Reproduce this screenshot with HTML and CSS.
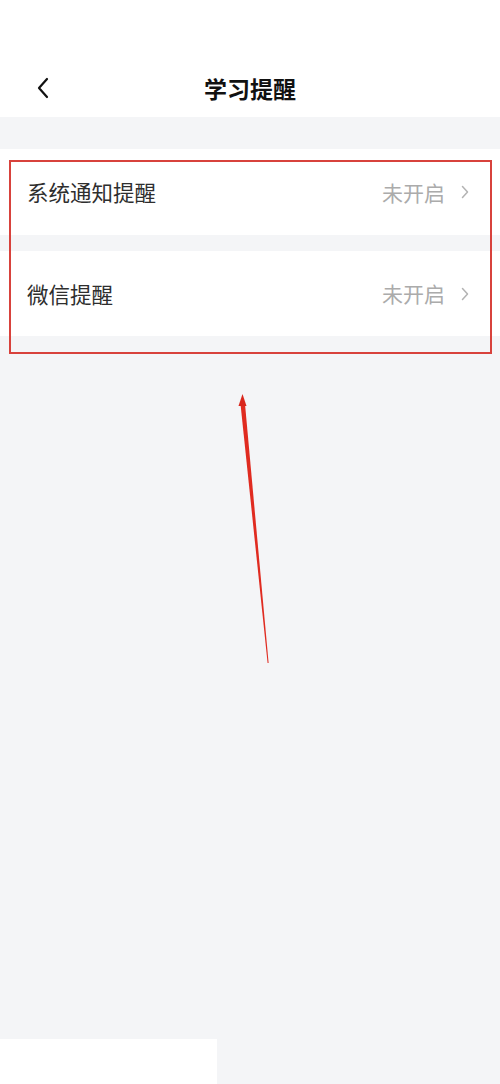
FILE: index.html
```html
<!DOCTYPE html>
<html lang="zh">
<head>
<meta charset="utf-8">
<link rel="stylesheet" href="styles.css">
</head>
<body>
<div class="page">
  <header class="nav">
    <span class="back">
      <svg width="14" height="22" viewBox="0 0 14 22"><path d="M11 2 L3 11 L11 20" fill="none" stroke="#111" stroke-width="2.2" stroke-linecap="round" stroke-linejoin="round"/></svg>
    </span>
    <h1 class="title">学习提醒</h1>
  </header>
  <div class="list">
    <div class="row row-first">
      <span class="label">系统通知提醒</span>
      <span class="value">未开启<svg class="chev" width="8" height="14" viewBox="0 0 8 14"><path d="M1.5 1.5 L6.5 7 L1.5 12.5" fill="none" stroke="#b3b3b3" stroke-width="1.5" stroke-linecap="round" stroke-linejoin="round"/></svg></span>
    </div>
    <div class="row row-second">
      <span class="label">微信提醒</span>
      <span class="value">未开启<svg class="chev" width="8" height="14" viewBox="0 0 8 14"><path d="M1.5 1.5 L6.5 7 L1.5 12.5" fill="none" stroke="#b3b3b3" stroke-width="1.5" stroke-linecap="round" stroke-linejoin="round"/></svg></span>
    </div>
  </div>
  <div class="spacer"></div>
  <div class="bottom-block"></div>
  <div class="highlight"></div>
  <svg class="arrow" width="500" height="1084" viewBox="0 0 500 1084">
    <polygon points="240.5,404 245,404 268.6,663 267.6,663" fill="#e02b20"/>
    <polygon points="242.5,394 238.5,406 246.5,406" fill="#d9261c"/>
  </svg>
</div>
</body>
</html>
```
FILE: styles.css
```css
* { box-sizing: border-box; }
html, body { margin: 0; padding: 0; }
body {
  background: #f4f5f7;
  font-family: "Noto Sans CJK SC", "Noto Sans", sans-serif;
  color: #333;
}
.page {
  position: relative;
  width: 500px;
  height: 1084px;
  display: flex;
  flex-direction: column;
  overflow: hidden;
}
.nav {
  height: 117px;
  background: #fff;
  position: relative;
  display: flex;
  align-items: center;
  justify-content: center;
  padding-top: 59px;
}
.nav .back {
  position: absolute;
  left: 36px;
  top: 77px;
  display: flex;
}
.title {
  margin: 0;
  font-size: 23px;
  font-weight: 700;
  color: #111;
  line-height: 1;
}
.list {
  margin-top: 32px;
  display: flex;
  flex-direction: column;
  gap: 16px;
}
.row {
  background: #fff;
  display: flex;
  align-items: center;
  justify-content: space-between;
  padding: 0 31px 0 27px;
}
.row-first { height: 86px; }
.row-second { height: 85px; }
.label {
  font-size: 21.5px;
  color: #2e2e2e;
  line-height: 1;
}
.value {
  font-size: 21px;
  color: #ababab;
  line-height: 1;
  display: flex;
  align-items: center;
  gap: 16px;
}
.spacer { flex: 1; }
.bottom-block {
  width: 217px;
  height: 45px;
  background: #fff;
}
.highlight {
  position: absolute;
  left: 9px;
  top: 160px;
  width: 483px;
  height: 194px;
  border: 2px solid #d8423c;
}
.arrow {
  position: absolute;
  left: 0;
  top: 0;
  pointer-events: none;
}
```
